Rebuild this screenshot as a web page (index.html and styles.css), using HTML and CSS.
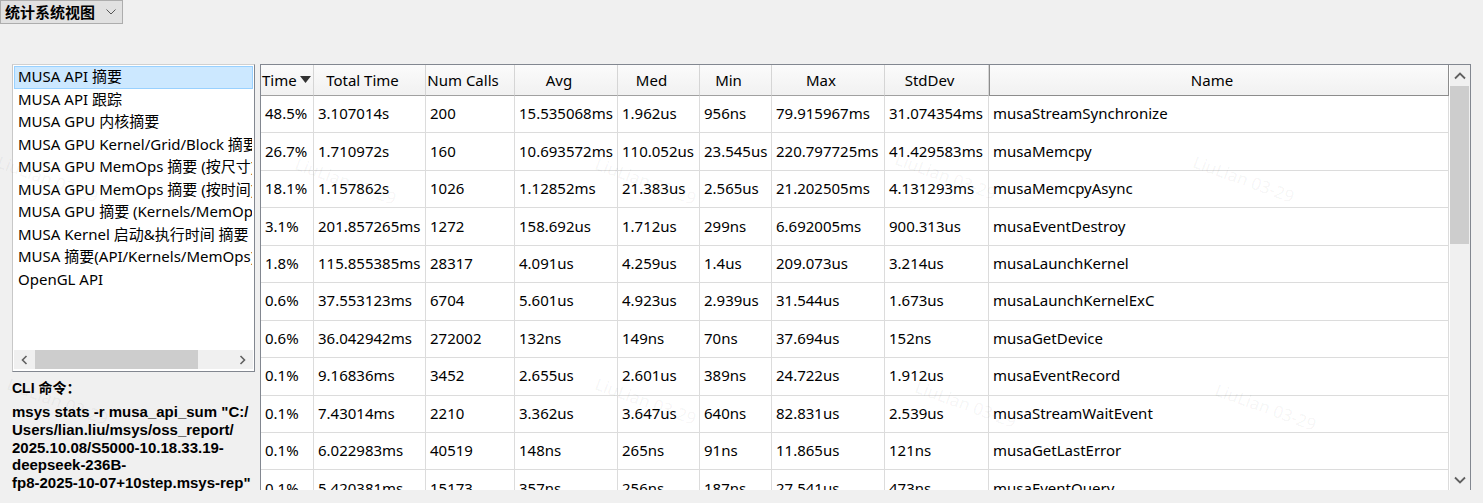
FILE: index.html
```html
<!DOCTYPE html>
<html lang="zh-CN">
<head>
<meta charset="utf-8">
<title>统计系统视图</title>
<link rel="stylesheet" href="styles.css">
</head>
<body>
<div class="page">
  <div class="topbar">
    <div class="combo">
      <span class="combo-text">统计系统视图</span>
      <svg class="combo-arrow" width="10" height="6" viewBox="0 0 10 6"><path d="M0.5 0.5 L5 5 L9.5 0.5" fill="none" stroke="#555" stroke-width="1"/></svg>
    </div>
  </div>

  <div class="main">
    <div class="side">
      <div class="listbox">
        <div class="list-items">
          <div class="item selected">MUSA API 摘要</div>
          <div class="item">MUSA API 跟踪</div>
          <div class="item">MUSA GPU 内核摘要</div>
          <div class="item">MUSA GPU Kernel/Grid/Block 摘要</div>
          <div class="item">MUSA GPU MemOps 摘要 (按尺寸)</div>
          <div class="item">MUSA GPU MemOps 摘要 (按时间)</div>
          <div class="item">MUSA GPU 摘要 (Kernels/MemOps)</div>
          <div class="item">MUSA Kernel 启动&amp;执行时间 摘要</div>
          <div class="item">MUSA 摘要(API/Kernels/MemOps)</div>
          <div class="item">OpenGL API</div>
        </div>
        <div class="hscroll">
          <svg class="sarrow" width="9" height="10" viewBox="0 0 9 10"><path d="M6.5 1 L2.5 5 L6.5 9" fill="none" stroke="#606060" stroke-width="1.6"/></svg>
          <div class="htrack"><div class="hthumb"></div></div>
          <svg class="sarrow" width="9" height="10" viewBox="0 0 9 10"><path d="M2.5 1 L6.5 5 L2.5 9" fill="none" stroke="#606060" stroke-width="1.6"/></svg>
        </div>
      </div>
      <div class="cli-label">CLI 命令：</div>
      <div class="cli-cmd">msys stats -r musa_api_sum "C:/<br>Users/lian.liu/msys/oss_report/<br>2025.10.08/S5000-10.18.33.19-<br>deepseek-236B-<br>fp8-2025-10-07+10step.msys-rep"</div>
    </div>

    <div class="tablepanel">
      <div class="table">
        <div class="row head">
          <div class="hc first">Time<svg class="sort" width="11" height="7" viewBox="0 0 11 7"><path d="M0 0 H11 L5.5 7 Z" fill="#333"/></svg></div>
          <div class="hc">Total Time</div>
          <div class="hc">Num Calls</div>
          <div class="hc">Avg</div>
          <div class="hc">Med</div>
          <div class="hc">Min</div>
          <div class="hc">Max</div>
          <div class="hc">StdDev</div>
          <div class="hc active">Name</div>
        </div>
        <div class="row"><div class="c">48.5%</div><div class="c">3.107014s</div><div class="c">200</div><div class="c">15.535068ms</div><div class="c">1.962us</div><div class="c">956ns</div><div class="c">79.915967ms</div><div class="c">31.074354ms</div><div class="c">musaStreamSynchronize</div></div>
        <div class="row"><div class="c">26.7%</div><div class="c">1.710972s</div><div class="c">160</div><div class="c">10.693572ms</div><div class="c">110.052us</div><div class="c">23.545us</div><div class="c">220.797725ms</div><div class="c">41.429583ms</div><div class="c">musaMemcpy</div></div>
        <div class="row"><div class="c">18.1%</div><div class="c">1.157862s</div><div class="c">1026</div><div class="c">1.12852ms</div><div class="c">21.383us</div><div class="c">2.565us</div><div class="c">21.202505ms</div><div class="c">4.131293ms</div><div class="c">musaMemcpyAsync</div></div>
        <div class="row"><div class="c">3.1%</div><div class="c">201.857265ms</div><div class="c">1272</div><div class="c">158.692us</div><div class="c">1.712us</div><div class="c">299ns</div><div class="c">6.692005ms</div><div class="c">900.313us</div><div class="c">musaEventDestroy</div></div>
        <div class="row"><div class="c">1.8%</div><div class="c">115.855385ms</div><div class="c">28317</div><div class="c">4.091us</div><div class="c">4.259us</div><div class="c">1.4us</div><div class="c">209.073us</div><div class="c">3.214us</div><div class="c">musaLaunchKernel</div></div>
        <div class="row"><div class="c">0.6%</div><div class="c">37.553123ms</div><div class="c">6704</div><div class="c">5.601us</div><div class="c">4.923us</div><div class="c">2.939us</div><div class="c">31.544us</div><div class="c">1.673us</div><div class="c">musaLaunchKernelExC</div></div>
        <div class="row"><div class="c">0.6%</div><div class="c">36.042942ms</div><div class="c">272002</div><div class="c">132ns</div><div class="c">149ns</div><div class="c">70ns</div><div class="c">37.694us</div><div class="c">152ns</div><div class="c">musaGetDevice</div></div>
        <div class="row"><div class="c">0.1%</div><div class="c">9.16836ms</div><div class="c">3452</div><div class="c">2.655us</div><div class="c">2.601us</div><div class="c">389ns</div><div class="c">24.722us</div><div class="c">1.912us</div><div class="c">musaEventRecord</div></div>
        <div class="row"><div class="c">0.1%</div><div class="c">7.43014ms</div><div class="c">2210</div><div class="c">3.362us</div><div class="c">3.647us</div><div class="c">640ns</div><div class="c">82.831us</div><div class="c">2.539us</div><div class="c">musaStreamWaitEvent</div></div>
        <div class="row"><div class="c">0.1%</div><div class="c">6.022983ms</div><div class="c">40519</div><div class="c">148ns</div><div class="c">265ns</div><div class="c">91ns</div><div class="c">11.865us</div><div class="c">121ns</div><div class="c">musaGetLastError</div></div>
        <div class="row"><div class="c">0.1%</div><div class="c">5.420381ms</div><div class="c">15173</div><div class="c">357ns</div><div class="c">256ns</div><div class="c">187ns</div><div class="c">27.541us</div><div class="c">473ns</div><div class="c">musaEventQuery</div></div>
      </div>
      <div class="vscroll">
        <svg class="varrow" width="12" height="8" viewBox="0 0 12 8"><path d="M1 6.5 L6 1.5 L11 6.5" fill="none" stroke="#606060" stroke-width="1.8"/></svg>
        <div class="vtrack"><div class="vthumb"></div></div>
        <svg class="varrow" width="12" height="8" viewBox="0 0 12 8"><path d="M1 1.5 L6 6.5 L11 1.5" fill="none" stroke="#606060" stroke-width="1.8"/></svg>
      </div>
    </div>
  </div>

  <div class="watermarks">
    <span class="wm" style="left:2px;top:150px">LiuLian 03-29</span>
    <span class="wm" style="left:300px;top:152px">LiuLian 03-29</span>
    <span class="wm" style="left:600px;top:152px">LiuLian 03-29</span>
    <span class="wm" style="left:900px;top:147px">LiuLian 03-29</span>
    <span class="wm" style="left:1198px;top:150px">LiuLian 03-29</span>
    <span class="wm" style="left:12px;top:372px">LiuLian 03-29</span>
    <span class="wm" style="left:600px;top:372px">LiuLian 03-29</span>
    <span class="wm" style="left:920px;top:375px">LiuLian 03-29</span>
    <span class="wm" style="left:1220px;top:378px">LiuLian 03-29</span>
  </div>
</div>
</body>
</html>
```

FILE: styles.css
```css
* { box-sizing: border-box; }
html, body {
  margin: 0;
  padding: 0;
  background: #f0f0f0;
  width: 1483px;
  height: 503px;
  overflow: hidden;
}
.page {
  position: relative;
  width: 1483px;
  height: 503px;
  font-family: "Noto Sans", "Noto Sans CJK SC", sans-serif;
  font-size: 15px;
  color: #000;
}

/* combo box */
.topbar { height: 64px; }
.combo {
  width: 123px;
  height: 24px;
  background: #e1e1e1;
  border: 1px solid #adadad;
  display: flex;
  align-items: center;
  padding-left: 4px;
}
.combo-text {
  font-family: "Noto Sans CJK SC", sans-serif;
  font-weight: 700;
  font-size: 15px;
  line-height: 20px;
}
.combo-arrow { margin-left: 11px; }

.main {
  display: flex;
  align-items: flex-start;
}

/* left side */
.side {
  width: 260px;
  padding-left: 12px;
  padding-right: 6px;
}
.listbox {
  width: 243px;
  height: 308px;
  background: #fff;
  border: 1px solid;
  border-color: #d0d0d0 #828790 #828790 #c8c8c8;
  padding: 1px;
  display: flex;
  flex-direction: column;
}
.list-items {
  flex: 1;
  overflow: hidden;
}
.item {
  height: 22.55px;
  line-height: 19px;
  padding-left: 3px;
  white-space: nowrap;
  overflow: hidden;
  border: 1px solid transparent;
}
.item.selected {
  background: #cce8ff;
  border-color: #99d1ff;
}
.hscroll {
  height: 19px;
  background: #f0f0f0;
  display: flex;
  align-items: center;
  margin-bottom: 1px;
}
.sarrow { flex: none; margin: 0 6px; }
.htrack { flex: 1; height: 19px; position: relative; }
.hthumb {
  width: 163px;
  height: 19px;
  background: #cdcdcd;
}

.cli-label {
  margin-top: 8px;
  font-family: "Liberation Sans", "Noto Sans CJK SC", sans-serif;
  font-weight: 700;
  font-size: 14px;
  line-height: 17px;
}
.cli-cmd {
  margin-top: 6px;
  font-family: "Liberation Sans", "Noto Sans CJK SC", sans-serif;
  font-weight: 700;
  font-size: 15px;
  line-height: 17.8px;
  white-space: nowrap;
}

/* table */
.tablepanel {
  width: 1211px;
  height: 426px;
  background: #fff;
  border-top: 1px solid #828790;
  border-left: 1px solid #828790;
  border-right: 1px solid #828790;
  display: flex;
  overflow: hidden;
}
.table {
  width: 1189px;
  flex: none;
  overflow: hidden;
}
.row {
  display: grid;
  grid-template-columns: 53px 112px 89px 103px 82px 72px 113px 104px 460px;
  height: 37.45px;
}
.row.head {
  height: 31px;
}
.hc {
  background: linear-gradient(#fbfbfb, #f1f1f1);
  border-right: 1px solid #d5d5d5;
  border-bottom: 1px solid #a0a0a0;
  display: flex;
  align-items: center;
  justify-content: center;
  padding-right: 14px;
  padding-bottom: 1px;
  white-space: nowrap;
  overflow: hidden;
}
.hc.first {
  justify-content: flex-start;
  padding: 0 0 1px 1px;
}
.hc.active {
  border: 1px solid #8c8c8c;
  border-top: none;
}
.sort { margin-left: 3px; flex: none; }
.c {
  border-right: 1px solid #dcdcdc;
  border-bottom: 1px solid #dcdcdc;
  padding-left: 4px;
  padding-bottom: 2px;
  display: flex;
  align-items: center;
  white-space: nowrap;
  overflow: hidden;
}

.vscroll {
  width: 20px;
  flex: none;
  background: #f0f0f0;
  display: flex;
  flex-direction: column;
  align-items: center;
}
.varrow { flex: none; margin: 7px 0 6px; }
.vtrack { flex: 1; width: 20px; }
.vthumb {
  width: 19px;
  height: 158px;
  background: #cdcdcd;
}

/* watermark overlay */
.watermarks {
  position: absolute;
  left: 0;
  top: 0;
  width: 1483px;
  height: 503px;
  pointer-events: none;
}
.wm {
  position: absolute;
  font-family: "Noto Sans", sans-serif;
  font-size: 17px;
  color: rgba(0, 0, 0, 0.05);
  transform: rotate(20deg);
  transform-origin: 0 0;
  white-space: nowrap;
}
```
